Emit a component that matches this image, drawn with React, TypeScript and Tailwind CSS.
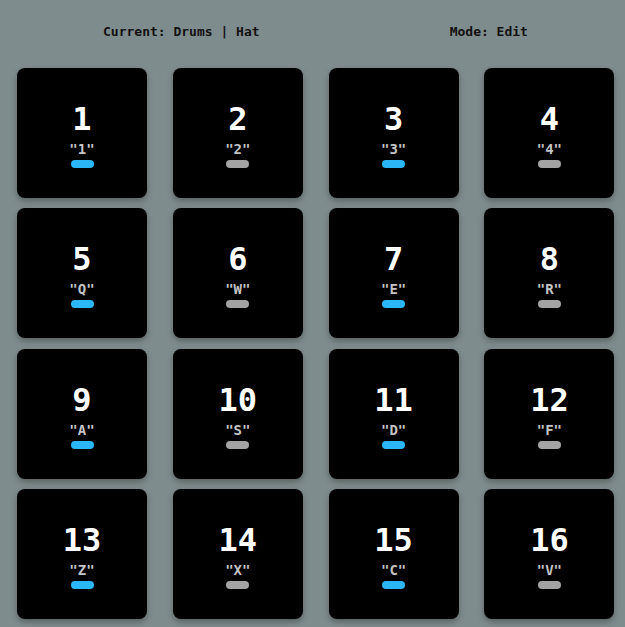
import React from "react";

const pads = [
  { n: "1", k: "1" }, { n: "2", k: "2" }, { n: "3", k: "3" }, { n: "4", k: "4" },
  { n: "5", k: "Q" }, { n: "6", k: "W" }, { n: "7", k: "E" }, { n: "8", k: "R" },
  { n: "9", k: "A" }, { n: "10", k: "S" }, { n: "11", k: "D" }, { n: "12", k: "F" },
  { n: "13", k: "Z" }, { n: "14", k: "X" }, { n: "15", k: "C" }, { n: "16", k: "V" },
];

export default function App() {
  return (
    <div className="min-h-screen bg-[#7f8c8d] pt-[22px] font-['DejaVu_Sans_Mono',monospace]">
      <div className="flex justify-around pl-[8px] pr-[2px] h-[20px] items-center text-[13px] text-[#111] font-bold">
        <span>Current: Drums | Hat</span>
        <span>Mode: Edit</span>
      </div>
      <div className="mt-[26px] pl-[17px] grid grid-cols-[repeat(4,130px)] gap-x-[25.8px] gap-y-[10.4px]">
        {pads.map((p, i) => (
          <div
            key={p.n}
            className="h-[130px] rounded-[8px] bg-black shadow-[0_3px_6px_rgba(0,0,0,0.3)] flex flex-col items-center pt-[35px]"
          >
            <div className="text-[32px] leading-none font-bold text-white">{p.n}</div>
            <div className="mt-[7px] text-[14px] leading-none font-bold text-[#c4c4c4]">"{p.k}"</div>
            <div
              className={
                "mt-[4px] w-[23px] h-[8px] rounded-full " +
                (i % 2 === 0 ? "bg-[#2bb7f7]" : "bg-[#a3a3a3]")
              }
            />
          </div>
        ))}
      </div>
    </div>
  );
}
